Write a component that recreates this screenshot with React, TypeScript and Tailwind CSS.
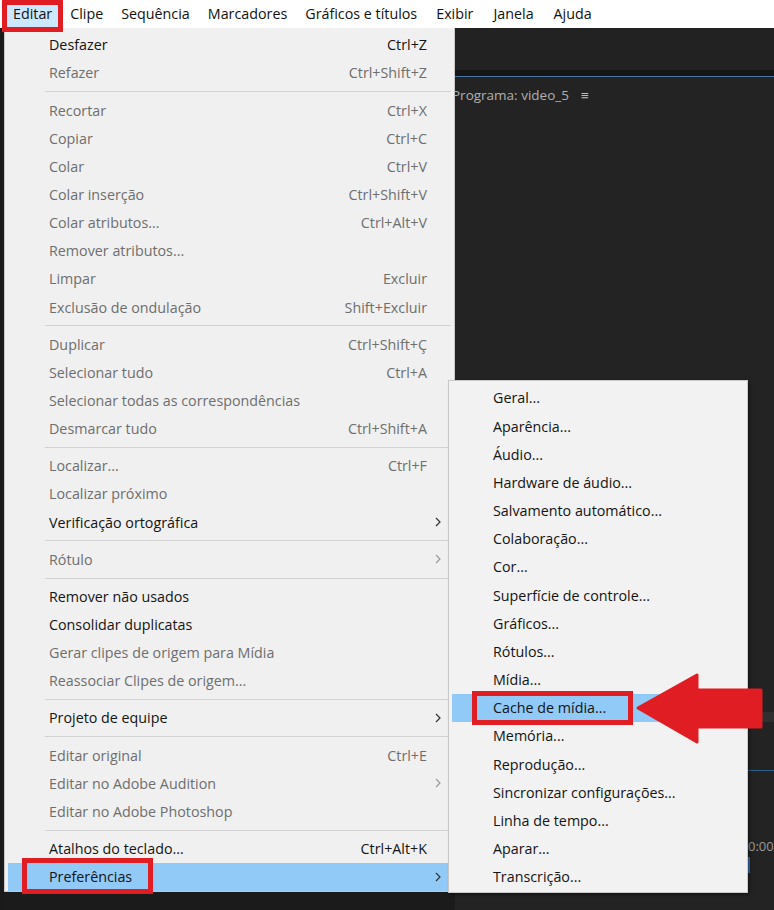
import React from "react";

type Item = { label: string; shortcut?: string; disabled?: boolean; sub?: boolean; active?: boolean };

const mainGroups: Item[][] = [
  [
    { label: "Desfazer", shortcut: "Ctrl+Z" },
    { label: "Refazer", shortcut: "Ctrl+Shift+Z", disabled: true },
  ],
  [
    { label: "Recortar", shortcut: "Ctrl+X", disabled: true },
    { label: "Copiar", shortcut: "Ctrl+C", disabled: true },
    { label: "Colar", shortcut: "Ctrl+V", disabled: true },
    { label: "Colar inserção", shortcut: "Ctrl+Shift+V", disabled: true },
    { label: "Colar atributos...", shortcut: "Ctrl+Alt+V", disabled: true },
    { label: "Remover atributos...", disabled: true },
    { label: "Limpar", shortcut: "Excluir", disabled: true },
    { label: "Exclusão de ondulação", shortcut: "Shift+Excluir", disabled: true },
  ],
  [
    { label: "Duplicar", shortcut: "Ctrl+Shift+Ç", disabled: true },
    { label: "Selecionar tudo", shortcut: "Ctrl+A", disabled: true },
    { label: "Selecionar todas as correspondências", disabled: true },
    { label: "Desmarcar tudo", shortcut: "Ctrl+Shift+A", disabled: true },
  ],
  [
    { label: "Localizar...", shortcut: "Ctrl+F", disabled: true },
    { label: "Localizar próximo", disabled: true },
    { label: "Verificação ortográfica", sub: true },
  ],
  [{ label: "Rótulo", sub: true, disabled: true }],
  [
    { label: "Remover não usados" },
    { label: "Consolidar duplicatas" },
    { label: "Gerar clipes de origem para Mídia", disabled: true },
    { label: "Reassociar Clipes de origem...", disabled: true },
  ],
  [{ label: "Projeto de equipe", sub: true }],
  [
    { label: "Editar original", shortcut: "Ctrl+E", disabled: true },
    { label: "Editar no Adobe Audition", sub: true, disabled: true },
    { label: "Editar no Adobe Photoshop", disabled: true },
  ],
  [
    { label: "Atalhos do teclado...", shortcut: "Ctrl+Alt+K" },
    { label: "Preferências", sub: true, active: true },
  ],
];

const prefItems = [
  "Geral...",
  "Aparência...",
  "Áudio...",
  "Hardware de áudio...",
  "Salvamento automático...",
  "Colaboração...",
  "Cor...",
  "Superfície de controle...",
  "Gráficos...",
  "Rótulos...",
  "Mídia...",
  "Cache de mídia...",
  "Memória...",
  "Reprodução...",
  "Sincronizar configurações...",
  "Linha de tempo...",
  "Aparar...",
  "Transcrição...",
];

const topMenu = ["Editar", "Clipe", "Sequência", "Marcadores", "Gráficos e títulos", "Exibir", "Janela", "Ajuda"];

function Chevron({ faded }: { faded?: boolean }) {
  return (
    <svg width="6" height="10" viewBox="0 0 6 10" className={faded ? "text-[#9a9a9a]" : "text-[#333]"}>
      <polyline points="1,1 5,5 1,9" fill="none" stroke="currentColor" strokeWidth="1.2" />
    </svg>
  );
}

function MenuRow({ item }: { item: Item }) {
  return (
    <div
      className={`mx-[3px] flex h-[28.15px] items-center pl-[41px] ${
        item.active ? "bg-[#91c9f7]" : ""
      } ${item.disabled ? "text-[#6e6e6e]" : "text-[#141414]"}`}
    >
      <span className="flex-1 whitespace-nowrap">{item.label}</span>
      {item.shortcut && <span className="whitespace-nowrap">{item.shortcut}</span>}
      <span className="flex w-[24px] justify-end pr-[10px]">{item.sub && <Chevron faded={item.disabled} />}</span>
    </div>
  );
}

export default function App() {
  return (
    <div
      className="relative h-[910px] w-[774px] overflow-hidden bg-[#1b1b1b] text-[14.3px]"
      style={{ fontFamily: '"Open Sans", "Noto Sans", sans-serif' }}
    >
      {/* menu bar */}
      <div className="flex h-[28px] items-center bg-white pl-[4px] text-[#111]">
        {topMenu.map((m, i) => (
          <div
            key={m}
            className={`flex h-[28px] items-center ${i === 0 ? "bg-[#cce8ff]" : ""} ${
              i >= 5 ? "px-[10px]" : "px-[9px]"
            }`}
          >
            {m}
          </div>
        ))}
      </div>

      <div className="flex h-[882px]">
        <div className="w-[4px] bg-[#1a1a1a]" />

        {/* Editar menu */}
        <div className="relative z-10 h-[864px] w-[451px] border border-t-0 border-[#c8c8c8] bg-[#f0f0f0] pt-[3px]">
          {mainGroups.map((g, gi) => (
            <div key={gi}>
              {gi > 0 && (
                <div className="flex h-[9px] items-center pl-[40px] pr-[3px]">
                  <div className="h-px w-full bg-[#d2d2d2]" />
                </div>
              )}
              {g.map((it) => (
                <MenuRow key={it.label} item={it} />
              ))}
            </div>
          ))}
        </div>

        {/* workspace */}
        <div className="flex flex-1 flex-col bg-[#232323]">
          <div className="h-[42px] bg-[#222]" />
          <div className="h-[6px] bg-[#151515]" />
          <div className="h-px bg-[#4a77a6]" />
          <div className="flex h-[36px] items-center gap-[12px] text-[13.5px] text-[#b0b0b0]">
            <span className="-ml-[3px] whitespace-nowrap">Programa: video_5</span>
            <span className="text-[#bdbdbd]">≡</span>
          </div>
          <div className="flex-1" />
          <div className="ml-[293px] flex h-[230px] flex-col">
            <div className="mt-[32px] h-[10px] bg-[#2f2f2f]" />
            <div className="mt-[48px] h-px bg-[#2f5d8c]" />
            <div className="mt-[66px] text-[13px] text-[#9a9a9a]">0:00</div>
            <div className="h-[16px] w-[2px] bg-[#3a6fb0]" />
          </div>
        </div>
      </div>

      {/* Preferências submenu */}
      <div className="absolute left-[448px] top-[380px] z-20 h-[513px] w-[300px] border border-[#c8c8c8] bg-[#f2f2f2] pt-[3px] shadow-[2px_2px_3px_rgba(0,0,0,0.35)]">
        {prefItems.map((p, i) => (
          <div
            key={p}
            className={`mx-[3px] flex h-[28.18px] items-center pl-[41px] text-[#141414] ${
              i === 11 ? "bg-[#91c9f7]" : ""
            }`}
          >
            {p}
          </div>
        ))}
      </div>

      {/* red annotations */}
      <div className="absolute left-[2px] top-0 z-30 h-[32px] w-[61px] border-[5px] border-[#e11d24]" />
      <div className="absolute left-[22px] top-[858px] z-30 h-[36px] w-[131px] border-[5px] border-[#e11d24]" />
      <div className="absolute left-[472px] top-[691px] z-30 h-[34px] w-[161px] border-[5px] border-[#e11d24]" />
      <svg className="absolute left-[630px] top-[668px] z-30" width="140" height="82" viewBox="630 668 140 82">
        <polygon
          points="638,708 697,675 697,690 761,690 761,727 697,727 697,742"
          fill="#e11d24"
          stroke="#e11d24"
          strokeWidth="3"
          strokeLinejoin="round"
        />
      </svg>
    </div>
  );
}
